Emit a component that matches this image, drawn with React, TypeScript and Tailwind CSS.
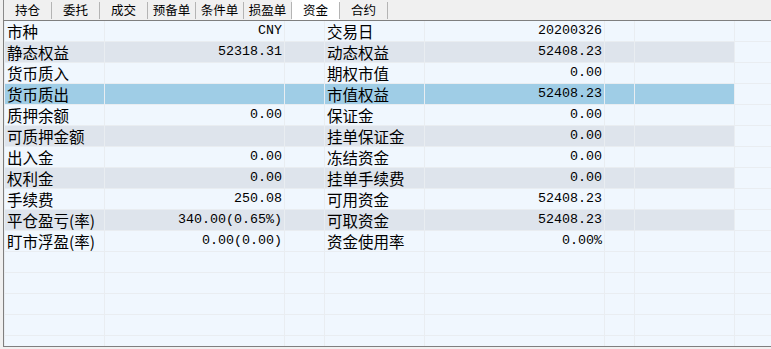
import React from "react";

const tabs = ["持仓", "委托", "成交", "预备单", "条件单", "损盈单", "资金", "合约"];

const rows: { a: string; av: string; b: string; bv: string }[] = [
  { a: "市种", av: "CNY", b: "交易日", bv: "20200326" },
  { a: "静态权益", av: "52318.31", b: "动态权益", bv: "52408.23" },
  { a: "货币质入", av: "", b: "期权市值", bv: "0.00" },
  { a: "货币质出", av: "", b: "市值权益", bv: "52408.23" },
  { a: "质押余额", av: "0.00", b: "保证金", bv: "0.00" },
  { a: "可质押金额", av: "", b: "挂单保证金", bv: "0.00" },
  { a: "出入金", av: "0.00", b: "冻结资金", bv: "0.00" },
  { a: "权利金", av: "0.00", b: "挂单手续费", bv: "0.00" },
  { a: "手续费", av: "250.08", b: "可用资金", bv: "52408.23" },
  { a: "平仓盈亏(率)", av: "340.00(0.65%)", b: "可取资金", bv: "52408.23" },
  { a: "盯市浮盈(率)", av: "0.00(0.00)", b: "资金使用率", bv: "0.00%" },
];

const SELECTED = 3;
const TOTAL_ROWS = 16;

const cjk = "font-['Noto_Sans_CJK_SC','Noto_Sans',sans-serif]";
const mono = "font-['Liberation_Mono',monospace]";

function Row({ idx }: { idx: number }) {
  const r = rows[idx];
  const bg =
    idx === SELECTED
      ? "bg-[#9fcde6]"
      : r && idx % 2 === 1
      ? "bg-[#dee4ec]"
      : "bg-[#f0f7fe]";
  const label = `${bg} h-[20px] pl-[2px] text-[15.5px] leading-[20px] text-black whitespace-nowrap ${cjk}`;
  const value = `${bg} h-[20px] pr-[2px] text-right text-[13.33px] leading-[20px] text-black whitespace-nowrap ${mono}`;
  return (
    <>
      <div className={label}>{r?.a}</div>
      <div className={value}>{r?.av}</div>
      <div className={bg} />
      <div className={label}>{r?.b}</div>
      <div className={value}>{r?.bv}</div>
      <div className={bg} />
      <div className={bg} />
      <div className="bg-[#f0f7fe]" />
    </>
  );
}

export default function App() {
  return (
    <div className="w-[771px] h-[349px] bg-[#f0f0f0] overflow-hidden flex flex-col">
      <div className="h-[20px] flex pl-[3px] shrink-0">
        <div className="w-px h-full bg-[#8a8a8a]" />
        {tabs.map((t) => {
          const active = t === "资金";
          return (
            <div
              key={t}
              className={`w-[48px] h-full flex items-center ${
                active ? "bg-white" : ""
              }`}
            >
              <span
                className={`flex-1 text-center text-[12.5px] leading-[18px] text-black ${cjk}`}
              >
                {t}
              </span>
              <div className="w-px h-[17px] bg-[#b4b4b4]" />
            </div>
          );
        })}
      </div>
      <div className="ml-[3px] h-[327px] border-t border-b border-l border-[#7f7f7f] pl-px overflow-hidden bg-[#e9edf1]">
        <div className="grid grid-cols-[99px_179px_39px_99px_179px_29px_99px_1fr] gap-px">
          {Array.from({ length: TOTAL_ROWS }).map((_, i) => (
            <Row key={i} idx={i} />
          ))}
        </div>
      </div>
    </div>
  );
}
